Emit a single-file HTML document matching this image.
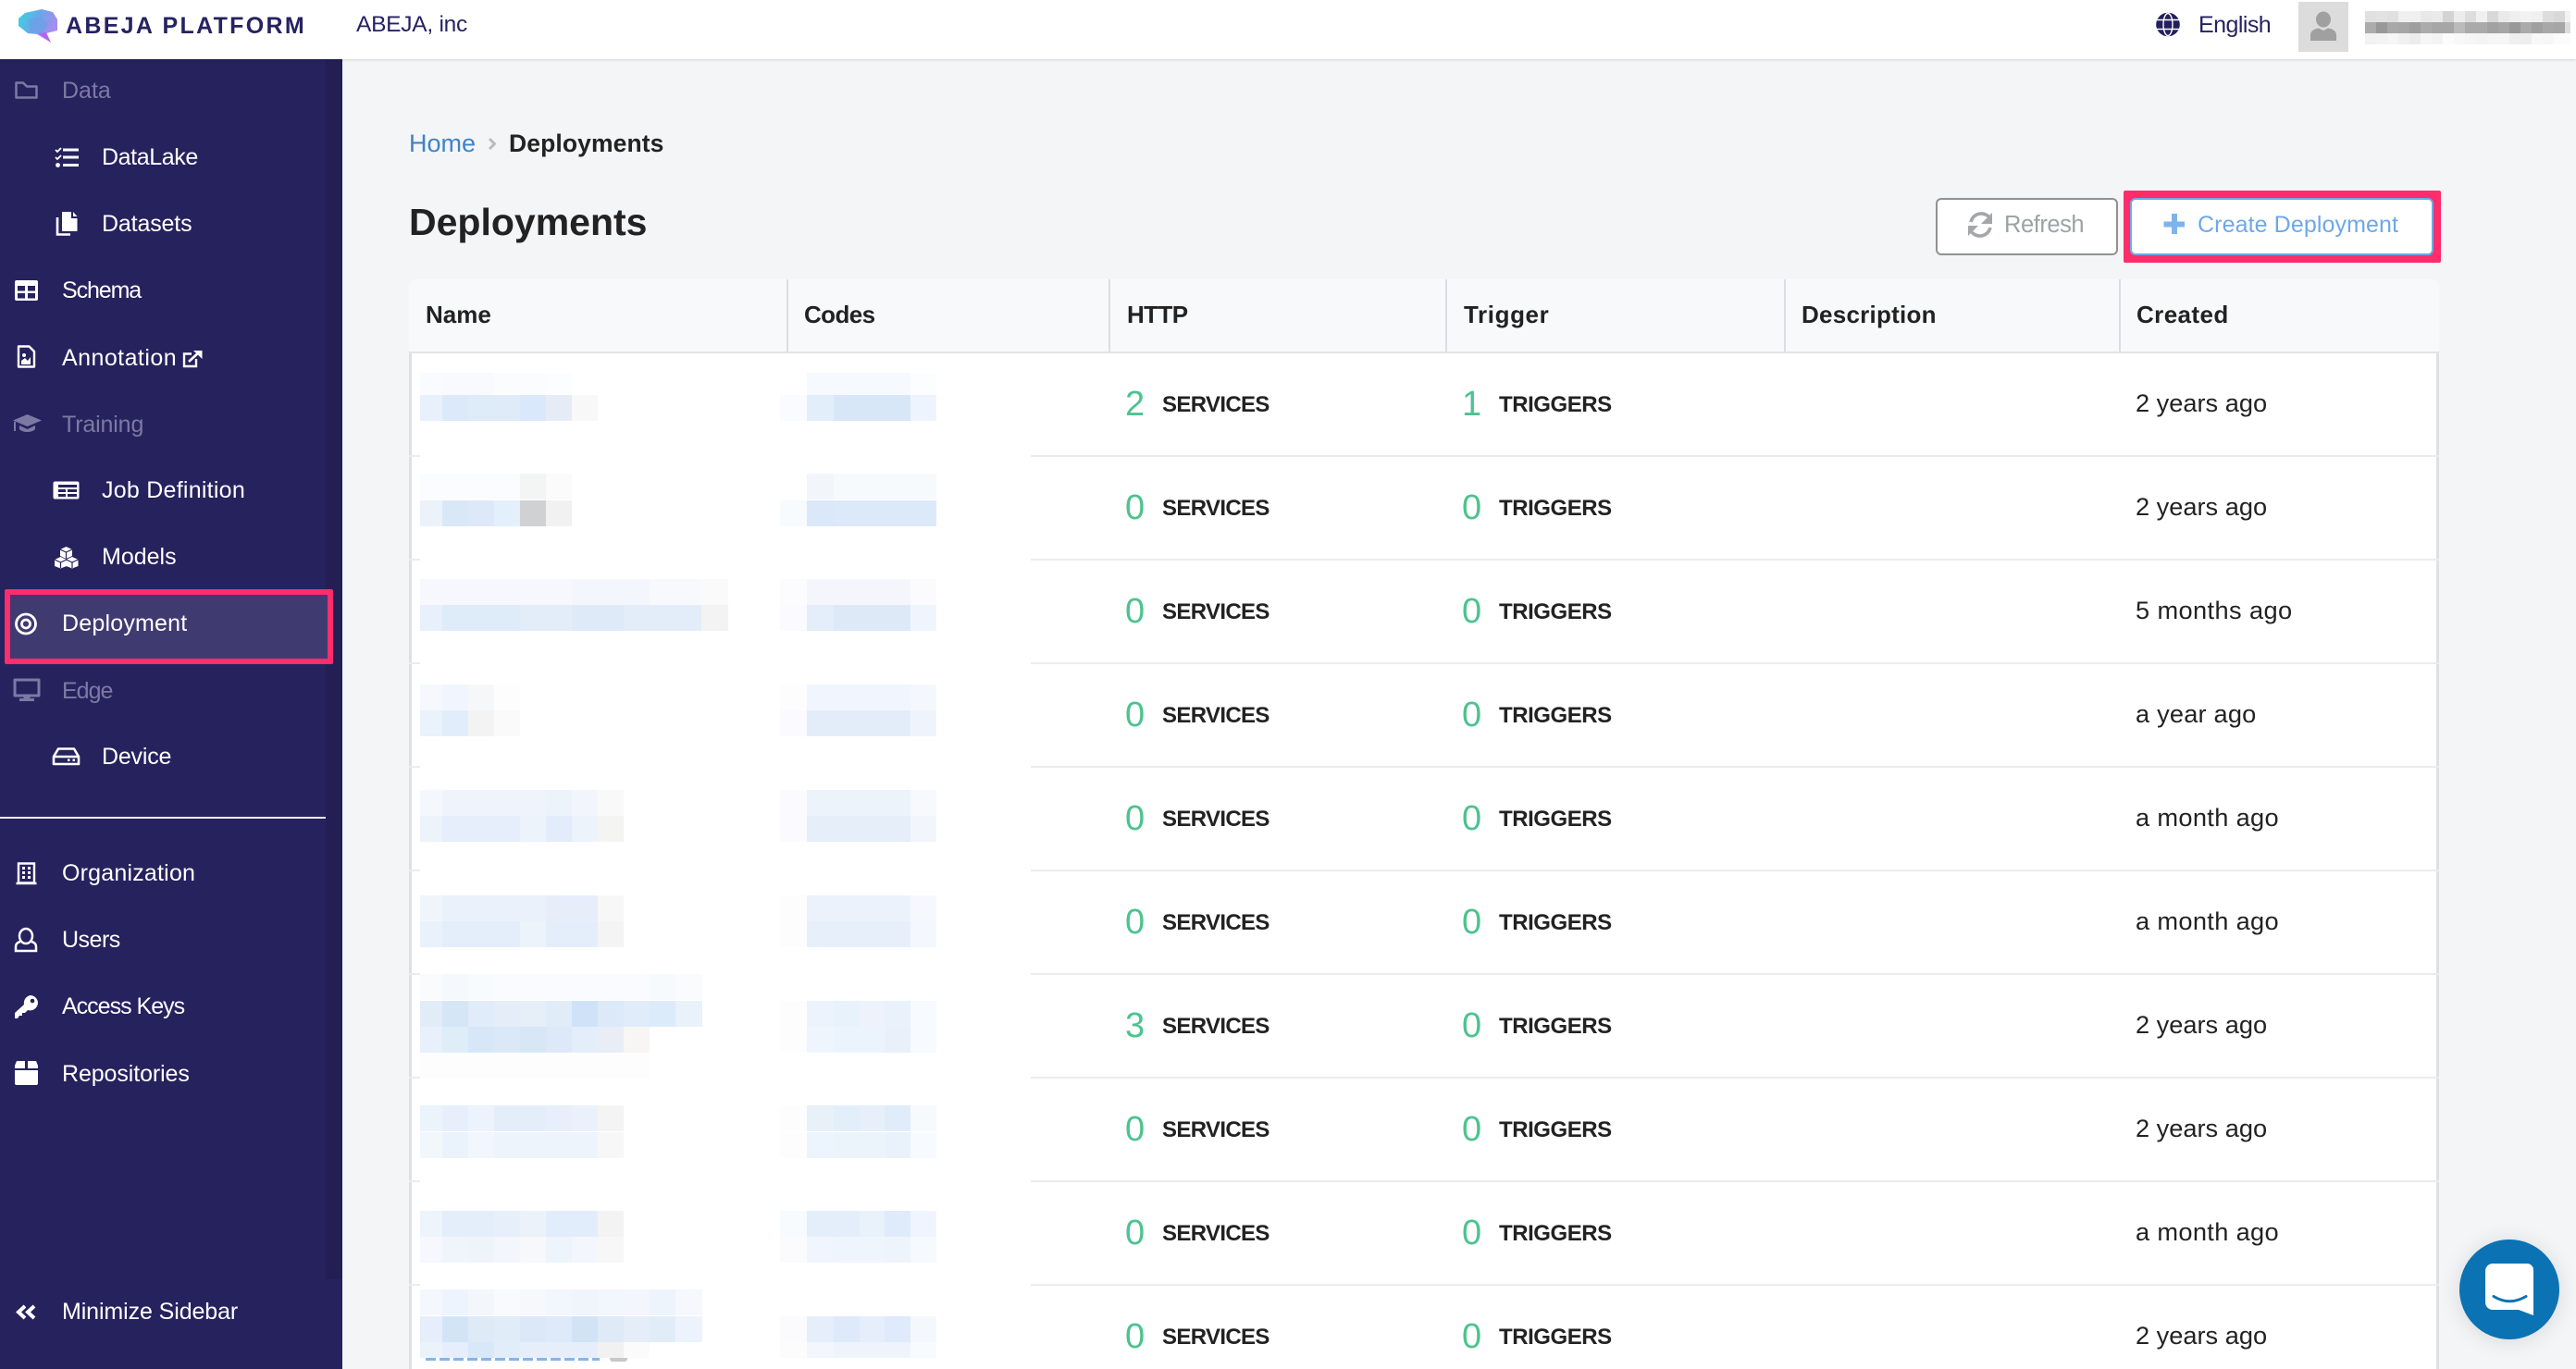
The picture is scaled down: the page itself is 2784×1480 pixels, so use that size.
<!DOCTYPE html>
<html><head><meta charset="utf-8"><title>Deployments</title>
<style>
html,body{margin:0;padding:0;background:#f4f5f7}
body{width:2784px;height:1480px;overflow:hidden;position:relative;font-family:"Liberation Sans",sans-serif;color:#222}
div,a,span{position:absolute;box-sizing:border-box}
.t{height:40px;line-height:40px;white-space:nowrap}
.s{font-size:25px;color:#fff}
.d{color:#7c7aa3}
.h{font-size:26px;font-weight:bold;color:#222;top:320px}
.n{font-size:38px;color:#4cc38f}
.b{font-size:24px;font-weight:bold;color:#222}
.sv{letter-spacing:-.65px}.tr{letter-spacing:-.45px}
.c{font-size:27.2px;color:#222}
.l{height:2px;background:#ebecee}
.m{height:28.4px}
</style></head>
<body>
<!-- sidebar -->
<div style="left:0;top:64px;width:370px;height:1416px;background:#26225e"></div>
<div style="left:352px;top:64px;width:18px;height:1319px;background:#231f55"></div>
<div style="left:0;top:883px;width:352px;height:2px;background:#f2f2f6"></div>
<div style="left:5px;top:637px;width:355px;height:81px;background:#3f3b71;border:6px solid #ff2d6c;border-radius:2px"></div>

<!-- header -->
<div style="left:0;top:0;width:2784px;height:64px;background:#fff;box-shadow:0 1px 3px rgba(0,0,0,.14)"></div>
<div class="t" style="left:71px;top:8px;font-size:25px;font-weight:bold;letter-spacing:2.3px;color:#262262">ABEJA PLATFORM</div>
<div class="t" style="left:385px;top:7px;font-size:24.5px;color:#262262;letter-spacing:-.25px">ABEJA, inc</div>
<div class="t" style="left:2376px;top:7px;font-size:25px;color:#262262;letter-spacing:-.55px">English</div>
<div style="left:2484px;top:2px;width:54px;height:54px;background:#dcdcdc"></div>

<!-- user mosaic -->
<div style="left:2556px;top:12px;width:222px;height:12px;background:linear-gradient(90deg,#e0e0e0 0 12px,#e2e2e2 0 24px,#e0e0e0 0 36px,#f0f0f0 0 60px,#e8e8e8 0 72px,#eaeaea 0 84px,#d3d3d3 0 96px,#ececec 0 108px,#ddd 0 120px,#f0f0f0 0 132px,#d8d8d8 0 144px,#eaeaea 0 156px,#efefef 0 168px,#f2f2f2 0 180px,#f0f0f0 0 192px,#ddd 0 204px,#d8d8d8 0 216px,#f2f2f2 0 222px)"></div>
<div style="left:2556px;top:24px;width:222px;height:12px;background:linear-gradient(90deg,#acacac 0 12px,#989898 0 24px,#a8a8a8 0 36px,#a6a6a6 0 48px,#9e9e9e 0 60px,#ababab 0 72px,#a6a6a6 0 96px,#bbb 0 108px,#aaa 0 132px,#a2a2a2 0 144px,#a6a6a6 0 156px,#999 0 168px,#aaa 0 180px,#a0a0a0 0 192px,#a8a8a8 0 204px,#a6a6a6 0 216px,#dcdcdc 0 222px)"></div>
<div style="left:2556px;top:36px;width:222px;height:12px;background:linear-gradient(90deg,#f2f2f2 0 12px,#f3f3f3 0 24px,#f6f6f6 0 36px,#f1f1f1 0 48px,#ececec 0 60px,#f6f6f6 0 72px,#f3f3f3 0 84px,#fbfbfb 0 96px,#f8f8f8 0 108px,#f6f6f6 0 120px,#f4f4f4 0 132px,#f6f6f6 0 156px,#efefef 0 168px,#eee 0 180px,#f8f8f8 0 192px,#f7f7f7 0 204px,#fbfbfb 0 222px)"></div>

<!-- sidebar labels -->
<div class="t s d" style="left:67px;top:78px">Data</div>
<div class="t s" style="left:110px;top:150px;letter-spacing:-.4px">DataLake</div>
<div class="t s" style="left:110px;top:222px;letter-spacing:-.15px">Datasets</div>
<div class="t s" style="left:67px;top:294px;letter-spacing:-1.1px">Schema</div>
<div class="t s" style="left:67px;top:367px;letter-spacing:.45px">Annotation</div>
<div class="t s d" style="left:67px;top:439px;letter-spacing:-.15px">Training</div>
<div class="t s" style="left:110px;top:510px;letter-spacing:.25px">Job Definition</div>
<div class="t s" style="left:110px;top:582px">Models</div>
<div class="t s" style="left:67px;top:654px;letter-spacing:.2px">Deployment</div>
<div class="t s d" style="left:67px;top:727px;letter-spacing:-1px">Edge</div>
<div class="t s" style="left:110px;top:798px;letter-spacing:-.2px">Device</div>
<div class="t s" style="left:67px;top:924px;letter-spacing:.2px">Organization</div>
<div class="t s" style="left:67px;top:996px;letter-spacing:-.5px">Users</div>
<div class="t s" style="left:67px;top:1068px;letter-spacing:-1px">Access Keys</div>
<div class="t s" style="left:67px;top:1141px;letter-spacing:-.1px">Repositories</div>
<div class="t s" style="left:67px;top:1398px;letter-spacing:-.1px">Minimize Sidebar</div>

<!-- breadcrumb + title -->
<div class="t" style="left:442px;top:135px;font-size:27px;color:#3f82c8">Home</div>
<div class="t" style="left:550px;top:135px;font-size:26.5px;font-weight:bold;color:#222;letter-spacing:.1px">Deployments</div>
<div class="t" style="left:442px;top:218px;height:44px;line-height:44px;font-size:41px;font-weight:bold;color:#222">Deployments</div>

<!-- buttons -->
<div style="left:2295px;top:206px;width:343px;height:78px;background:#ff2d6c;border-radius:2px"></div>
<div style="left:2092px;top:214px;width:197px;height:62px;background:#fff;border:2px solid #8f9192;border-radius:6px"></div>
<div style="left:2302px;top:214px;width:328px;height:62px;background:#fff;border:2px solid #6fa9e6;border-radius:6px"></div>
<div class="t" style="left:2166px;top:223px;font-size:25.5px;color:#9fa2a4;letter-spacing:-.45px">Refresh</div>
<div class="t" style="left:2375px;top:223px;font-size:25px;color:#6ea8e8;letter-spacing:.1px">Create Deployment</div>

<!-- table -->
<div style="left:442px;top:302px;width:2194px;height:78px;background:#f8f9fb;border-radius:8px 8px 0 0"></div>
<div style="left:442px;top:380px;width:2194px;height:1100px;background:#fff;border-left:3px solid #dfe0e2;border-right:3px solid #dfe0e2;border-top:2px solid #e3e4e6"></div>
<div style="left:850px;top:302px;width:2px;height:78px;background:#dcdde0"></div>
<div style="left:1198px;top:302px;width:2px;height:78px;background:#dcdde0"></div>
<div style="left:1562px;top:302px;width:2px;height:78px;background:#dcdde0"></div>
<div style="left:1928px;top:302px;width:2px;height:78px;background:#dcdde0"></div>
<div style="left:2290px;top:302px;width:2px;height:78px;background:#dcdde0"></div>
<div class="t h" style="left:460px">Name</div>
<div class="t h" style="left:869px;letter-spacing:-.6px">Codes</div>
<div class="t h" style="left:1218px;letter-spacing:-.6px">HTTP</div>
<div class="t h" style="left:1582px;letter-spacing:.6px">Trigger</div>
<div class="t h" style="left:1947px;letter-spacing:.25px">Description</div>
<div class="t h" style="left:2309px;letter-spacing:.4px">Created</div>

<!-- row lines -->
<div class="l" style="left:442px;top:492px;width:12px"></div><div class="l" style="left:1114px;top:492px;width:1522px"></div>
<div class="l" style="left:442px;top:604px;width:12px"></div><div class="l" style="left:1114px;top:604px;width:1522px"></div>
<div class="l" style="left:442px;top:716px;width:12px"></div><div class="l" style="left:1114px;top:716px;width:1522px"></div>
<div class="l" style="left:442px;top:828px;width:12px"></div><div class="l" style="left:1114px;top:828px;width:1522px"></div>
<div class="l" style="left:442px;top:940px;width:12px"></div><div class="l" style="left:1114px;top:940px;width:1522px"></div>
<div class="l" style="left:442px;top:1052px;width:12px"></div><div class="l" style="left:1114px;top:1052px;width:1522px"></div>
<div class="l" style="left:442px;top:1164px;width:12px"></div><div class="l" style="left:1114px;top:1164px;width:1522px"></div>
<div class="l" style="left:442px;top:1276px;width:12px"></div><div class="l" style="left:1114px;top:1276px;width:1522px"></div>
<div class="l" style="left:442px;top:1388px;width:12px"></div><div class="l" style="left:1114px;top:1388px;width:1522px"></div>

<!-- rows -->
<div class="t n" style="left:1216px;top:417px">2</div><div class="t b sv" style="left:1256px;top:418px">SERVICES</div><div class="t n" style="left:1580px;top:417px">1</div><div class="t b tr" style="left:1620px;top:418px">TRIGGERS</div><div class="t c" style="left:2308px;top:416px">2 years ago</div>
<div class="t n" style="left:1216px;top:529px">0</div><div class="t b sv" style="left:1256px;top:530px">SERVICES</div><div class="t n" style="left:1580px;top:529px">0</div><div class="t b tr" style="left:1620px;top:530px">TRIGGERS</div><div class="t c" style="left:2308px;top:528px">2 years ago</div>
<div class="t n" style="left:1216px;top:641px">0</div><div class="t b sv" style="left:1256px;top:642px">SERVICES</div><div class="t n" style="left:1580px;top:641px">0</div><div class="t b tr" style="left:1620px;top:642px">TRIGGERS</div><div class="t c" style="left:2308px;top:640px;letter-spacing:.4px">5 months ago</div>
<div class="t n" style="left:1216px;top:753px">0</div><div class="t b sv" style="left:1256px;top:754px">SERVICES</div><div class="t n" style="left:1580px;top:753px">0</div><div class="t b tr" style="left:1620px;top:754px">TRIGGERS</div><div class="t c" style="left:2308px;top:752px;letter-spacing:.2px">a year ago</div>
<div class="t n" style="left:1216px;top:865px">0</div><div class="t b sv" style="left:1256px;top:866px">SERVICES</div><div class="t n" style="left:1580px;top:865px">0</div><div class="t b tr" style="left:1620px;top:866px">TRIGGERS</div><div class="t c" style="left:2308px;top:864px;letter-spacing:.35px">a month ago</div>
<div class="t n" style="left:1216px;top:977px">0</div><div class="t b sv" style="left:1256px;top:978px">SERVICES</div><div class="t n" style="left:1580px;top:977px">0</div><div class="t b tr" style="left:1620px;top:978px">TRIGGERS</div><div class="t c" style="left:2308px;top:976px;letter-spacing:.35px">a month ago</div>
<div class="t n" style="left:1216px;top:1089px">3</div><div class="t b sv" style="left:1256px;top:1090px">SERVICES</div><div class="t n" style="left:1580px;top:1089px">0</div><div class="t b tr" style="left:1620px;top:1090px">TRIGGERS</div><div class="t c" style="left:2308px;top:1088px">2 years ago</div>
<div class="t n" style="left:1216px;top:1201px">0</div><div class="t b sv" style="left:1256px;top:1202px">SERVICES</div><div class="t n" style="left:1580px;top:1201px">0</div><div class="t b tr" style="left:1620px;top:1202px">TRIGGERS</div><div class="t c" style="left:2308px;top:1200px">2 years ago</div>
<div class="t n" style="left:1216px;top:1313px">0</div><div class="t b sv" style="left:1256px;top:1314px">SERVICES</div><div class="t n" style="left:1580px;top:1313px">0</div><div class="t b tr" style="left:1620px;top:1314px">TRIGGERS</div><div class="t c" style="left:2308px;top:1312px;letter-spacing:.35px">a month ago</div>
<div class="t n" style="left:1216px;top:1425px">0</div><div class="t b sv" style="left:1256px;top:1426px">SERVICES</div><div class="t n" style="left:1580px;top:1425px">0</div><div class="t b tr" style="left:1620px;top:1426px">TRIGGERS</div><div class="t c" style="left:2308px;top:1424px">2 years ago</div>

<!-- blurred name column -->
<div class="m" style="left:454px;top:403px;width:164px;height:24px;background:linear-gradient(90deg,#fafbfe 0 24px,#f8fafe 0 80px,#fafcfe 0 136px,#fcfdfe 0 164px)"></div>
<div class="m" style="left:454px;top:427px;width:192px;background:linear-gradient(90deg,#e8f0fb 0 24px,#dce9f8 0 52px,#deebf8 0 80px,#e0ebf9 0 108px,#d9e8fa 0 136px,#e6ecf5 0 164px,#f8f8f8 0 192px)"></div>
<div class="m" style="left:454px;top:512px;width:164px;background:linear-gradient(90deg,#fafcff 0 108px,#f3f5f4 0 136px,#fbfbfb 0 164px)"></div>
<div class="m" style="left:454px;top:541px;width:164px;background:linear-gradient(90deg,#ebf2fa 0 24px,#d9e8f7 0 52px,#dde9f9 0 80px,#e3f0fc 0 108px,#cfd1d2 0 136px,#f1f1f1 0 164px)"></div>
<div class="m" style="left:454px;top:626px;width:333px;background:linear-gradient(90deg,#f6f8fd 0 164px,#f3f6fd 0 248px,#f7f9fd 0 304px,#fafafa 0 333px)"></div>
<div class="m" style="left:454px;top:654px;width:333px;background:linear-gradient(90deg,#e8f0fb 0 24px,#deebf9 0 108px,#e3edf9 0 164px,#dfeaf9 0 220px,#e3edf9 0 304px,#f3f3f3 0 333px)"></div>
<div class="m" style="left:454px;top:740px;width:108px;background:linear-gradient(90deg,#f6f8fd 0 24px,#f1f5fd 0 52px,#f6f7f9 0 80px,#fdfdfe 0 108px)"></div>
<div class="m" style="left:454px;top:768px;width:108px;background:linear-gradient(90deg,#eaf2fb 0 24px,#e1edfa 0 52px,#f3f3f4 0 80px,#fafafa 0 108px)"></div>
<div class="m" style="left:454px;top:854px;width:220px;background:linear-gradient(90deg,#f4f7fc 0 24px,#eff4fc 0 136px,#edf3fb 0 164px,#f2f6fc 0 192px,#f9f9f9 0 220px)"></div>
<div class="m" style="left:454px;top:882px;width:220px;background:linear-gradient(90deg,#edf3fb 0 24px,#e5eefa 0 108px,#ecf3fb 0 136px,#e2ecfa 0 164px,#edf3fb 0 192px,#f4f4f2 0 220px)"></div>
<div class="m" style="left:454px;top:968px;width:220px;background:linear-gradient(90deg,#f0f5fc 0 24px,#eaf1fb 0 136px,#e7eefa 0 192px,#f7f7f7 0 220px)"></div>
<div class="m" style="left:454px;top:996px;width:220px;background:linear-gradient(90deg,#e9f2fb 0 24px,#e4eefa 0 108px,#ecf3fb 0 136px,#e4eefa 0 192px,#f4f4f4 0 220px)"></div>
<div class="m" style="left:454px;top:1053px;width:305px;background:linear-gradient(90deg,#fafbfd 0 24px,#f5f8fd 0 52px,#f7fbfe 0 80px,#fafbfe 0 248px,#f6fafd 0 276px,#fafbfd 0 305px)"></div>
<div class="m" style="left:454px;top:1082px;width:305px;background:linear-gradient(90deg,#e2ecf9 0 24px,#d5e6f6 0 52px,#e0ecf9 0 80px,#e4edf8 0 108px,#e6eef8 0 136px,#e0ecf8 0 164px,#cfe2f7 0 192px,#dce9f8 0 220px,#e0ecf9 0 248px,#dcebf9 0 276px,#e9f1fa 0 305px)"></div>
<div class="m" style="left:454px;top:1110px;width:248px;background:linear-gradient(90deg,#e7f0fb 0 24px,#dfedf9 0 52px,#d7e7f7 0 80px,#dae8f7 0 108px,#d7e7f6 0 136px,#dde9f8 0 164px,#e4eefb 0 192px,#e9eef6 0 220px,#f7f6f5 0 248px)"></div>
<div class="m" style="left:454px;top:1138px;width:248px;background:#fdfdfd"></div>
<div class="m" style="left:454px;top:1195px;width:220px;background:linear-gradient(90deg,#ebf3fb 0 24px,#e6effb 0 52px,#ecf3fc 0 80px,#e3eefa 0 136px,#e6effa 0 164px,#ebf1fb 0 192px,#f4f4f4 0 220px)"></div>
<div class="m" style="left:454px;top:1224px;width:220px;background:linear-gradient(90deg,#f2f7fb 0 24px,#eaf3fc 0 52px,#f2f6fd 0 80px,#eef4fb 0 136px,#edf4fb 0 192px,#f7f7f7 0 220px)"></div>
<div class="m" style="left:454px;top:1309px;width:220px;background:linear-gradient(90deg,#edf4fc 0 24px,#e3eefa 0 80px,#e7f0fa 0 108px,#ecf2f9 0 136px,#e2edfb 0 192px,#f3f3f3 0 220px)"></div>
<div class="m" style="left:454px;top:1337px;width:220px;background:linear-gradient(90deg,#f6f8fd 0 24px,#f0f5fc 0 52px,#eff4fb 0 80px,#f3f6fc 0 108px,#f6f8fb 0 136px,#edf4fb 0 164px,#f3f6fd 0 192px,#f7f7f7 0 220px)"></div>
<div class="m" style="left:454px;top:1394px;width:305px;background:linear-gradient(90deg,#f4f7fd 0 24px,#eef4fd 0 52px,#f3f7fb 0 80px,#f8fafd 0 108px,#f6f8fc 0 136px,#f2f6fd 0 164px,#f0f4fb 0 192px,#f2f6fd 0 220px,#f3f6fd 0 248px,#eef4fc 0 276px,#f5f8fc 0 305px)"></div>
<div class="m" style="left:454px;top:1423px;width:305px;background:linear-gradient(90deg,#e5eefa 0 24px,#d3e4f7 0 52px,#dfeaf7 0 80px,#e1ecf9 0 108px,#dce8f7 0 136px,#deeaf9 0 164px,#d3e3f6 0 192px,#deeaf7 0 220px,#e4edf8 0 248px,#e1ecf9 0 276px,#edf3fc 0 305px)"></div>
<div style="left:460px;top:1466px;width:188px;height:5px;background:repeating-linear-gradient(90deg,#84b5ec 0 11px,#fff 0 15px)"></div>
<div style="left:659px;top:1466px;width:19px;height:6px;background:#c8c8c8;border-radius:0 0 3px 3px"></div>
<div class="m" style="left:454px;top:1451px;width:248px;height:17px;background:linear-gradient(90deg,#eaf2fa 0 24px,#e5eefa 0 52px,#d9e8f9 0 80px,#e2edfa 0 108px,#e6eff9 0 192px,#f1f1f1 0 220px,#fbfbfb 0 248px)"></div>

<!-- blurred code column -->
<div class="m" style="left:872px;top:403px;width:140px;height:24px;background:linear-gradient(90deg,#f6f9fd 0 112px,#fcfdff 0 140px)"></div>
<div class="m" style="left:843px;top:427px;width:169px;background:linear-gradient(90deg,#fafbfe 0 29px,#e2eefa 0 58px,#d8e7f8 0 141px,#eef4fd 0 169px)"></div>
<div class="m" style="left:872px;top:512px;width:140px;background:linear-gradient(90deg,#f2f6fb 0 29px,#f7fafd 0 140px)"></div>
<div class="m" style="left:843px;top:541px;width:169px;background:linear-gradient(90deg,#f7fbfe 0 29px,#dae8f9 0 58px,#dce9f9 0 169px)"></div>
<div class="m" style="left:843px;top:626px;width:169px;background:linear-gradient(90deg,#fcfcff 0 29px,#f4f6fc 0 141px,#fbfbfe 0 169px)"></div>
<div class="m" style="left:843px;top:654px;width:169px;background:linear-gradient(90deg,#fbfbff 0 29px,#e4edfa 0 58px,#dde9f7 0 141px,#f0f4fd 0 169px)"></div>
<div class="m" style="left:843px;top:740px;width:169px;background:linear-gradient(90deg,#fdfdfe 0 29px,#f1f5fd 0 141px,#f4f7fc 0 169px)"></div>
<div class="m" style="left:843px;top:768px;width:169px;background:linear-gradient(90deg,#fbfbff 0 29px,#e3edfa 0 141px,#eff4fc 0 169px)"></div>
<div class="m" style="left:843px;top:854px;width:169px;background:linear-gradient(90deg,#fbfbff 0 29px,#edf3fb 0 141px,#f7f9fd 0 169px)"></div>
<div class="m" style="left:843px;top:882px;width:169px;background:linear-gradient(90deg,#fbfbff 0 29px,#e6eefa 0 141px,#f2f6fc 0 169px)"></div>
<div class="m" style="left:843px;top:968px;width:169px;background:linear-gradient(90deg,#fdfdfe 0 29px,#ecf2fb 0 141px,#f6f8fd 0 169px)"></div>
<div class="m" style="left:843px;top:996px;width:169px;background:linear-gradient(90deg,#fdfdfe 0 29px,#e7effb 0 141px,#f4f7fd 0 169px)"></div>
<div class="m" style="left:843px;top:1082px;width:169px;background:linear-gradient(90deg,#fdfdfe 0 29px,#edf3fc 0 58px,#e8f2fb 0 86px,#eef3fb 0 113px,#e9f1fa 0 141px,#f7fafe 0 169px)"></div>
<div class="m" style="left:843px;top:1110px;width:169px;background:linear-gradient(90deg,#fdfdfe 0 29px,#eff5fd 0 58px,#ebf3fc 0 113px,#eaf0fa 0 141px,#f7fafe 0 169px)"></div>
<div class="m" style="left:843px;top:1195px;width:169px;background:linear-gradient(90deg,#fdfdfe 0 29px,#e8f0f8 0 58px,#e3eefb 0 86px,#e6effa 0 113px,#e1ecfa 0 141px,#f6fafd 0 169px)"></div>
<div class="m" style="left:843px;top:1224px;width:169px;background:linear-gradient(90deg,#fdfdfe 0 29px,#ecf4fd 0 58px,#ecf4fb 0 113px,#e9f2fb 0 141px,#f7faff 0 169px)"></div>
<div class="m" style="left:843px;top:1309px;width:169px;background:linear-gradient(90deg,#f7fbfe 0 29px,#e4eefa 0 86px,#e9f1fb 0 113px,#dfebfb 0 141px,#eff4fe 0 169px)"></div>
<div class="m" style="left:843px;top:1337px;width:169px;background:linear-gradient(90deg,#fbfbfd 0 29px,#f1f5fd 0 58px,#eff5fd 0 113px,#eef4fc 0 141px,#f6f9fd 0 169px)"></div>
<div class="m" style="left:843px;top:1423px;width:169px;background:linear-gradient(90deg,#fbfbfd 0 29px,#e5eefa 0 58px,#deeaf9 0 86px,#e5eefa 0 113px,#dfeafa 0 141px,#f4f8fc 0 169px)"></div>
<div class="m" style="left:843px;top:1451px;width:169px;height:17px;background:linear-gradient(90deg,#fcfcfd 0 29px,#f3f6fd 0 58px,#eff4fc 0 141px,#f8fbfe 0 169px)"></div>

<!-- chat -->
<div style="left:2658px;top:1340px;width:108px;height:108px;border-radius:50%;background:#0b72b3;box-shadow:0 2px 24px rgba(0,0,0,.12)"></div>

<!-- icons -->
<svg width="2784" height="1480" viewBox="0 0 2784 1480" style="position:absolute;left:0;top:0">
<defs><linearGradient id="lg" x1="0" y1="0" x2="1" y2=".4"><stop offset="0" stop-color="#35d8df"/><stop offset=".5" stop-color="#69a8e8"/><stop offset="1" stop-color="#a98cf0"/></linearGradient></defs>
<!-- logo -->
<path d="M20 20L27 14L45 10L57 13L62 21V33L50 36L55 46L40 37L30 36L20 28Z" fill="url(#lg)"/>
<path d="M50 35L55 46L41 36Z" fill="#b865ee"/>
<path d="M30 22L44 17L52 26L46 36L33 34Z" fill="#6b9fe6" opacity=".6"/>
<!-- globe -->
<g fill="none" stroke="#231f5c" stroke-width="2.6"><circle cx="2343" cy="26.5" r="11.5" fill="#231f5c"/></g>
<g fill="none" stroke="#fff" stroke-width="1.4"><ellipse cx="2343" cy="26.5" rx="5" ry="12"/><path d="M2331 21.5H2355M2331 31.5H2355"/></g>
<!-- avatar -->
<g fill="#a0a0a0"><ellipse cx="2511" cy="21" rx="8" ry="8.5"/><path d="M2497 44V38C2497 33 2502 31 2506 30.500L2511 33L2516 30.500C2520 31 2525 33 2525 38V44Z"/></g>
<!-- refresh -->
<g fill="none" stroke="#a4a7a9" stroke-width="3.6"><path d="M2130 240A11.500 11.500 0 0 1 2150 235"/><path d="M2151 246A11.500 11.500 0 0 1 2131 251"/></g>
<path d="M2153 230V242H2141ZM2127 255V244H2138Z" fill="#a4a7a9"/>
<!-- plus -->
<path d="M2347 231h6v8.500h8v6h-8v7.500h-6v-7.500h-8.500v-6h8.500z" fill="#7fb3ec"/>
<!-- chat icon -->
<path d="M2694 1366H2731A7 7 0 0 1 2738 1373V1422L2722 1416H2694A8 8 0 0 1 2686 1408V1374A8 8 0 0 1 2694 1366Z" fill="#fff"/>
<path d="M2695 1401.500Q2712 1412 2730 1401.500" fill="none" stroke="#0b72b3" stroke-width="3" stroke-linecap="round"/>

<!-- Data folder -->
<path d="M17.500 89.500H25L29 93.500H39.500V105.500H17.500Z" fill="none" stroke="#7c7aa3" stroke-width="2.500" stroke-linejoin="round"/>
<!-- DataLake list -->
<g fill="#fff"><rect x="68" y="160.500" width="17" height="3"/><rect x="68" y="168.500" width="17" height="3"/><rect x="68" y="177" width="17" height="3"/><circle cx="62.500" cy="178.500" r="2.400"/></g>
<path d="M60 162L62 164L66 160M60 170L62 172L66 168" fill="none" stroke="#fff" stroke-width="1.800"/>
<!-- Datasets -->
<path d="M67 229H77V236H83.500V250H67Z" fill="#fff"/><path d="M79 229L83.500 234H79Z" fill="#fff"/><path d="M62 235V253.500H76" fill="none" stroke="#fff" stroke-width="2.600"/>
<!-- Schema -->
<rect x="16" y="303" width="25" height="22" rx="2" fill="#fff"/><g fill="#26225e"><rect x="19" y="309" width="8" height="5.500"/><rect x="30" y="309" width="8" height="5.500"/><rect x="19" y="317" width="8" height="5.500"/><rect x="30" y="317" width="8" height="5.500"/></g>
<!-- Annotation -->
<path d="M20 374.500H31.500L37 380V396.500H20Z" fill="none" stroke="#fff" stroke-width="2.400" stroke-linejoin="round"/><circle cx="26" cy="384" r="2" fill="#fff"/><path d="M23 394V390L27 387L30 390L33 386V394Z" fill="#fff"/>
<!-- external -->
<path d="M212 388V396H199V382.500H207" fill="none" stroke="#fff" stroke-width="2.400"/><path d="M204 391L216 380" stroke="#fff" stroke-width="2.600" fill="none"/><path d="M209 379H218.500V388Z" fill="#fff"/>
<!-- Training -->
<path d="M29.500 448L45 454.500L29.500 461L14 454.500Z" fill="#7c7aa3"/><path d="M21 460V464C25 468 34 468 38 464V460L29.500 464Z" fill="#7c7aa3"/><rect x="15" y="456" width="2" height="10" fill="#7c7aa3"/>
<!-- Job Definition -->
<rect x="57.500" y="520.500" width="28" height="19" rx="2" fill="#fff"/><g fill="#26225e"><rect x="63" y="524" width="20" height="3"/><rect x="63" y="529" width="8" height="3"/><rect x="73" y="529" width="10" height="3"/><rect x="63" y="534" width="8" height="3"/><rect x="73" y="534" width="10" height="3"/></g>
<!-- Models -->
<g fill="#fff"><path d="M71.500 591L78 594V601L71.500 604L65 601V594Z"/><path d="M65.500 602L72 605V612L65.500 614.500L59 612V605Z"/><path d="M78 602L84.500 605V612L78 614.500L71.500 612V605Z"/></g><g fill="none" stroke="#26225e" stroke-width="1.200"><path d="M65 594L71.500 597L78 594M71.500 597V604M59 605L65.500 608L72 605M65.500 608V614M71.500 605L78 608L84.500 605M78 608V614"/></g>
<!-- Deployment -->
<circle cx="28" cy="674.500" r="10.500" fill="none" stroke="#fff" stroke-width="2.800"/><circle cx="28" cy="674.500" r="4.500" fill="none" stroke="#fff" stroke-width="2.800"/>
<!-- Edge -->
<path d="M16 735H42V752H16Z" fill="none" stroke="#7c7aa3" stroke-width="3" stroke-linejoin="round"/><path d="M25.500 752H32.500V755H37V758H21V755H25.500Z" fill="#7c7aa3"/>
<!-- Device -->
<path d="M63 809.500H80L85 818V826H58V818Z" fill="none" stroke="#fff" stroke-width="2.600" stroke-linejoin="round"/><path d="M58 818H85" stroke="#fff" stroke-width="2.600"/><rect x="73" y="820.500" width="2.500" height="2.500" fill="#fff"/><rect x="78.500" y="820.500" width="2.500" height="2.500" fill="#fff"/>
<!-- Organization -->
<path d="M20 933.500H37V954.500H20Z" fill="none" stroke="#fff" stroke-width="2.400"/><path d="M17.500 955H39.500" stroke="#fff" stroke-width="2.400"/><g fill="#fff"><rect x="24" y="937" width="3" height="3"/><rect x="30" y="937" width="3" height="3"/><rect x="24" y="942" width="3" height="3"/><rect x="30" y="942" width="3" height="3"/><rect x="24" y="947" width="3" height="3"/><rect x="30" y="947" width="3" height="3"/></g>
<!-- Users -->
<ellipse cx="28" cy="1012" rx="7" ry="8" fill="none" stroke="#fff" stroke-width="2.500"/><path d="M22 1018C18 1019 17 1021 17 1024V1028H39V1024C39 1021 38 1019 34 1018" fill="none" stroke="#fff" stroke-width="2.500"/>
<!-- Key -->
<path d="M33 1076A8.500 8.500 0 0 1 41 1084A8.500 8.500 0 0 1 30 1092L27 1095H24V1098H21L19 1101H16V1095L26 1086A8.500 8.500 0 0 1 33 1076Z" fill="#fff"/><circle cx="35" cy="1082" r="2.300" fill="#26225e"/>
<!-- Repositories -->
<path d="M18 1147H27V1155H16V1152ZM30 1147H39L41 1152V1155H30ZM16 1157H41V1171A2 2 0 0 1 39 1173H18A2 2 0 0 1 16 1171Z" fill="#fff"/>
<!-- Minimize -->
<path d="M27 1412L20 1418.500L27 1425M37 1412L30 1418.500L37 1425" fill="none" stroke="#fff" stroke-width="4"/>
<!-- breadcrumb chevron -->
<path d="M529 150L534.500 155.500L529 161" fill="none" stroke="#b8b9bb" stroke-width="2.800"/>
</svg>
</body></html>
